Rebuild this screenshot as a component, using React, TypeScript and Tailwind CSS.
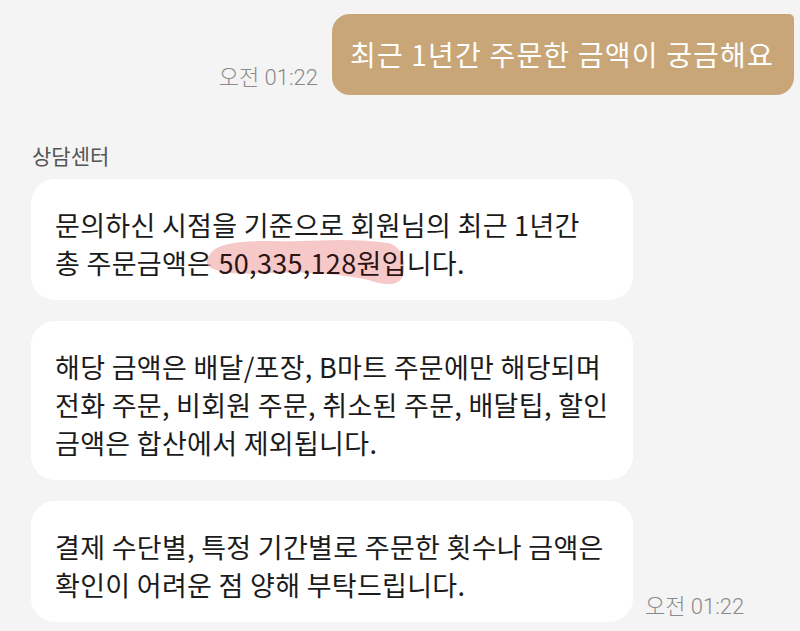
import React from 'react';

const font = { fontFamily: '"Noto Sans CJK KR", "Noto Sans", Roboto, sans-serif' };
const timeFont = { fontFamily: 'Roboto, "Noto Sans CJK KR", sans-serif' };

function Highlight({ children }: { children: React.ReactNode }) {
  return (
    <span className="relative inline-block">
      <svg
        className="absolute left-[-14px] top-[-10px] w-[206px] h-[54px] pointer-events-none"
        viewBox="0 0 208 52"
        preserveAspectRatio="none"
      >
        <path
          d="M4 22 C 8 8, 40 6, 72 7 C 112 7, 150 3, 186 9 C 200 13, 204 30, 199 42 C 194 51, 180 49, 164 44 C 130 37, 92 36, 52 38 C 26 39, 8 36, 3 30 C 1 27, 2 24, 4 22 Z"
          fill="#f3b0b0"
          fillOpacity="0.7"
        />
      </svg>
      <span className="relative text-[#2a1414]">{children}</span>
    </span>
  );
}

function Bubble({ children }: { children: React.ReactNode }) {
  return (
    <div className="w-[602px] bg-white rounded-[24px] pl-6 pr-4 pt-[27px] pb-[18px] text-[27px] leading-[38px] text-[#1b1b1b] tracking-[0.3px]">
      {children}
    </div>
  );
}

export default function App() {
  return (
    <div className="w-[800px] h-[631px] bg-[#f4f4f4] overflow-hidden relative" style={font}>
      {/* 내가 보낸 메시지 */}
      <div className="flex justify-end items-end gap-[14px] pt-[14px] pr-[6px]">
        <span className="text-[22px] font-light text-[#8a8a8a] mb-[1px]" style={timeFont}>
          오전 01:22
        </span>
        <div className="bg-[#c8a678] text-white text-[28px] leading-[38px] rounded-[18px] rounded-tr-[5px] pl-[18px] pr-[20px] pt-[21px] pb-[22px] tracking-[1.2px]">
          최근 1년간 주문한 금액이 궁금해요
        </div>
      </div>

      {/* 상담센터 */}
      <div className="pl-[31px] mt-[46px]">
        <div className="text-[21px] leading-[28px] text-[#555] pl-[1px] mb-[10px]">상담센터</div>

        <div className="flex flex-col gap-[21px]">
          <Bubble>
            문의하신 시점을 기준으로 회원님의 최근 1년간
            <br />총 주문금액은 <Highlight>50,335,128원입</Highlight>니다.
          </Bubble>

          <Bubble>
            해당 금액은 배달/포장, B마트 주문에만 해당되며
            <br />
            전화 주문, 비회원 주문, 취소된 주문, 배달팁, 할인
            <br />
            금액은 합산에서 제외됩니다.
          </Bubble>

          <div className="flex items-end gap-[12px]">
            <Bubble>
              결제 수단별, 특정 기간별로 주문한 횟수나 금액은
              <br />
              확인이 어려운 점 양해 부탁드립니다.
            </Bubble>
            <span className="text-[22px] font-light text-[#8a8a8a] mb-[-1px]" style={timeFont}>
              오전 01:22
            </span>
          </div>
        </div>
      </div>
    </div>
  );
}
